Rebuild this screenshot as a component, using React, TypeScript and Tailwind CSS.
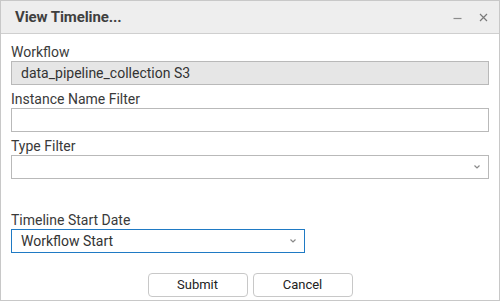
import React from 'react'

const Chevron = () => (
  <svg width="8" height="6" viewBox="0 0 8 6" className="text-[#8a8a8a]">
    <path d="M1.5 1.5 L4 4 L6.5 1.5" fill="none" stroke="currentColor" strokeWidth="1.2" />
  </svg>
)

const Label = ({ children }: { children: React.ReactNode }) => (
  <div className="h-[17px] text-[14px] leading-[17px] text-[#3a3a3a]">{children}</div>
)

export default function App() {
  return (
    <div className="w-[500px] h-[302px] bg-white font-['Roboto',sans-serif]">
      <div className="w-[500px] h-[301px] border border-[#c8c8c8] flex flex-col">
        <div className="h-[33px] shrink-0 bg-[#eeeeee] border-b border-[#cfcfcf] flex items-center pl-[14px] pr-[11px]">
          <span className="text-[15px] font-bold text-[#3f3f3f] tracking-[-0.1px]">View Timeline...</span>
          <div className="ml-auto flex items-center gap-[17px]">
            <svg width="9" height="9" viewBox="0 0 9 9">
              <path d="M0.5 5.5 H8.5" stroke="#8c8c8c" strokeWidth="1.2" />
            </svg>
            <svg width="9" height="9" viewBox="0 0 9 9">
              <path d="M1 1 L8 8 M8 1 L1 8" stroke="#7a7a7a" strokeWidth="1.2" />
            </svg>
          </div>
        </div>

        <div className="flex flex-col px-[10px] pt-[10px]">
          <Label>Workflow</Label>
          <div className="h-6 border border-[#b9b9b9] bg-[#e6e6e6] flex items-center pl-[9px] text-[14px] text-[#333]">
            data_pipeline_collection S3
          </div>

          <div className="mt-[6px]">
            <Label>Instance Name Filter</Label>
            <div className="h-6 border border-[#b9b9b9] bg-white" />
          </div>

          <div className="mt-[6px]">
            <Label>Type Filter</Label>
            <div className="h-6 border border-[#b9b9b9] bg-white flex items-center justify-end pr-[7px]">
              <Chevron />
            </div>
          </div>

          <div className="mt-[33px]">
            <Label>Timeline Start Date</Label>
            <div className="w-[294px] h-6 border border-[#1f7ac4] bg-white flex items-center pl-[9px] pr-[7px] text-[14px] text-[#333]">
              <span>Workflow Start</span>
              <span className="ml-auto flex">
                <Chevron />
              </span>
            </div>
          </div>

          <div className="mt-[20px] flex justify-center gap-[5px]">
            <button className="w-[100px] h-6 rounded-[4px] border border-[#c8c8c8] bg-white text-[13px] text-[#222]">
              Submit
            </button>
            <button className="w-[100px] h-6 rounded-[4px] border border-[#c8c8c8] bg-white text-[13px] text-[#222]">
              Cancel
            </button>
          </div>
        </div>
      </div>
    </div>
  )
}
